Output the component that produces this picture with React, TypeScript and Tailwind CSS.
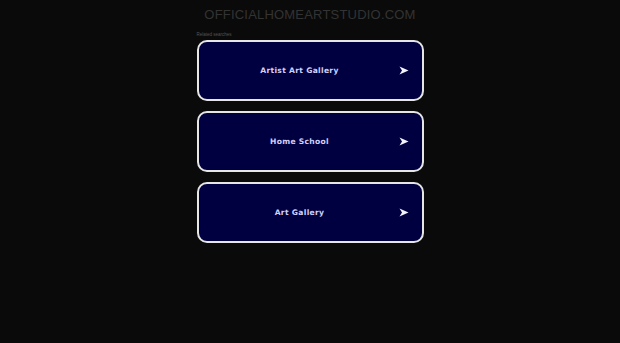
const links = ["Artist Art Gallery", "Home School", "Art Gallery"];

function Arrow() {
  return (
    <svg width="10" height="9" viewBox="0 0 10 9" className="ml-[8px] shrink-0">
      <path d="M0.5 0.5 L9.5 4.5 L0.5 8.5 L3 4.5 Z" fill="#f4f4ff" />
    </svg>
  );
}

export default function App() {
  return (
    <div className="min-h-[343px] w-full bg-[#0a0a0a] font-['Liberation_Sans',Arial,sans-serif]">
      <div className="mx-auto flex w-[227px] flex-col">
        <h1 className="mx-[-40px] pt-[7px] text-center text-[13px] leading-[16px] tracking-[0.2px] text-[#333333]">
          OFFICIALHOMEARTSTUDIO.COM
        </h1>
        <div className="mt-[9px] text-[4.5px] leading-[6px] text-[#555555]">Related searches</div>
        <div className="mt-[2px] flex flex-col gap-[10px]">
          {links.map((l) => (
            <a
              key={l}
              href="#"
              className="flex h-[61px] items-center rounded-[10px] border-2 border-[#e6e6e6] bg-[#000040] pl-[10px] pr-[13px]"
            >
              <span className="flex-1 text-center font-['DejaVu_Sans',Verdana,sans-serif] text-[7.6px] font-bold tracking-[0.3px] text-[#d0d0fa]">
                {l}
              </span>
              <Arrow />
            </a>
          ))}
        </div>
      </div>
    </div>
  );
}
